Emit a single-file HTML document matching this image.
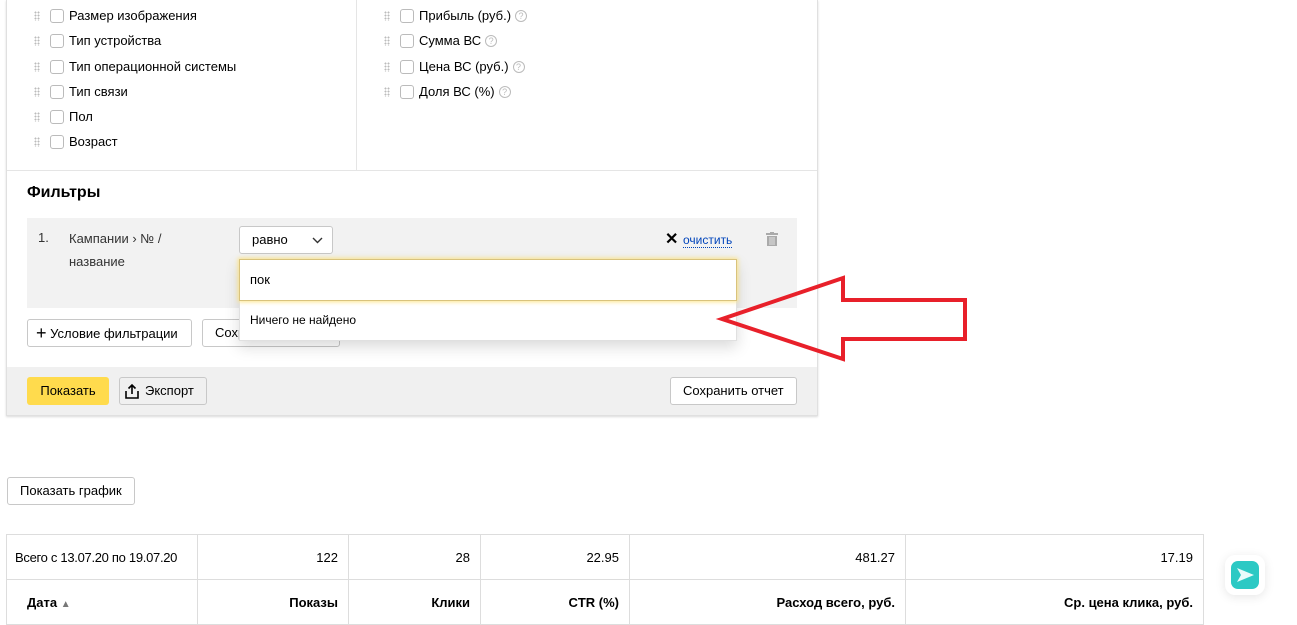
<!DOCTYPE html>
<html><head><meta charset="utf-8"><style>
*{box-sizing:border-box;margin:0;padding:0}
body{width:1297px;height:607px;overflow:hidden;background:#fff;font-family:"Liberation Sans",sans-serif;font-size:13px;color:#000;position:relative;white-space:nowrap}
.a{position:absolute}
.drag{position:absolute;width:6px;height:10px;background-image:radial-gradient(circle,#bbb 0.9px,transparent 1.1px);background-size:3px 3px}
.cb{position:absolute;width:14px;height:14px;border:1px solid #bbb;border-radius:3px;background:#fff}
.q{display:inline-block;width:12px;height:12px;border:1px solid #bbb;border-radius:50%;font-size:9px;color:#bbb;text-align:center;line-height:11px;margin-left:4px;vertical-align:1px}
.btn{position:absolute;border:1px solid #c8c8c8;border-radius:3px;background:#fff;height:28px;line-height:26px;padding:0 12px;font-size:13px;overflow:hidden}
td{border:1px solid #ddd;padding:0 10px;text-align:right;font-size:13px;white-space:nowrap}
</style></head><body>
<div class="a" style="left:6px;top:0;width:812px;height:416px;border:1px solid #e0e0e0;border-top:none;box-shadow:0 1px 2px rgba(0,0,0,.15)"></div>
<div class="a" style="left:356px;top:0;width:1px;height:170px;background:#e5e5e5"></div>
<div class="a" style="left:7px;top:170px;width:810px;height:1px;background:#e5e5e5"></div>

<div class="drag" style="left:34px;top:11px"></div><div class="cb" style="left:50px;top:9px"></div><div class="a" style="left:69px;top:8px">Размер изображения</div>
<div class="drag" style="left:34px;top:36px"></div><div class="cb" style="left:50px;top:34px"></div><div class="a" style="left:69px;top:33px">Тип устройства</div>
<div class="drag" style="left:34px;top:62px"></div><div class="cb" style="left:50px;top:60px"></div><div class="a" style="left:69px;top:59px">Тип операционной системы</div>
<div class="drag" style="left:34px;top:87px"></div><div class="cb" style="left:50px;top:85px"></div><div class="a" style="left:69px;top:84px">Тип связи</div>
<div class="drag" style="left:34px;top:112px"></div><div class="cb" style="left:50px;top:110px"></div><div class="a" style="left:69px;top:109px">Пол</div>
<div class="drag" style="left:34px;top:137px"></div><div class="cb" style="left:50px;top:135px"></div><div class="a" style="left:69px;top:134px">Возраст</div>

<div class="drag" style="left:384px;top:11px"></div><div class="cb" style="left:400px;top:9px"></div><div class="a" style="left:419px;top:8px">Прибыль (руб.)<span class="q">?</span></div>
<div class="drag" style="left:384px;top:36px"></div><div class="cb" style="left:400px;top:34px"></div><div class="a" style="left:419px;top:33px">Сумма ВС<span class="q">?</span></div>
<div class="drag" style="left:384px;top:62px"></div><div class="cb" style="left:400px;top:60px"></div><div class="a" style="left:419px;top:59px">Цена ВС (руб.)<span class="q">?</span></div>
<div class="drag" style="left:384px;top:87px"></div><div class="cb" style="left:400px;top:85px"></div><div class="a" style="left:419px;top:84px">Доля ВС (%)<span class="q">?</span></div>

<div class="a" style="left:27px;top:184px;font-size:16px;font-weight:bold">Фильтры</div>
<div class="a" style="left:27px;top:218px;width:770px;height:90px;background:#f2f2f2"></div>
<div class="a" style="left:38px;top:230px;color:#333">1.</div>
<div class="a" style="left:69px;top:227px;line-height:23px;color:#333">Кампании › № /<br>название</div>
<div class="btn" style="left:239px;top:226px;width:94px;height:28px;padding:0 12px;color:#000">равно<svg class="a" style="left:72px;top:10px" width="11" height="7"><path d="M1 1l4.5 4.5L10 1" stroke="#333" stroke-width="1.4" fill="none"/></svg></div>
<div class="a" style="left:665px;top:229px;font-size:16px;font-weight:bold">✕</div>
<div class="a" style="left:683px;top:234px;font-size:12px;color:#04b;border-bottom:1px dotted #04b;line-height:13px">очистить</div>
<svg class="a" style="left:766px;top:232px" width="12" height="14"><rect x="0" y="1" width="12" height="2" fill="#aaa"/><rect x="4" y="0" width="4" height="2" fill="#aaa"/><rect x="1" y="4" width="10" height="10" fill="#aaa"/><path d="M4 5v8M6 5v8M8 5v8" stroke="#f2f2f2" stroke-width=".8"/></svg>

<div class="btn" style="left:27px;top:319px;width:165px;padding:0 8px"><b style="font-size:18px;font-weight:normal;vertical-align:-1px">+</b> Условие фильтрации</div>
<div class="btn" style="left:202px;top:319px;width:138px">Сохранить фильтр</div>

<div class="a" style="left:239px;top:259px;width:498px;height:82px;background:#fff;box-shadow:0 6px 14px rgba(0,0,0,.15);border:1px solid #e0e0e0"></div>
<div class="a" style="left:239px;top:259px;width:498px;height:42px;border:1px solid #d9c37c;box-shadow:0 0 4px 1px #fde58a;background:#fff;padding:0 10px;line-height:40px">пок</div>
<div class="a" style="left:250px;top:313px;font-size:12px">Ничего не найдено</div>

<div class="a" style="left:7px;top:367px;width:810px;height:48px;background:#f0f0f0"></div>
<div class="a" style="left:27px;top:377px;width:82px;height:28px;background:#ffdb4d;border-radius:3px;line-height:28px;text-align:center">Показать</div>
<div class="btn" style="left:119px;top:377px;width:88px;background:#f0f0f0;padding:0 0 0 25px"><svg class="a" style="left:5px;top:5px" width="14" height="16"><path d="M7 11V2M3.5 5.5L7 2l3.5 3.5M1 8v7h12V8" stroke="#000" stroke-width="1.6" fill="none"/></svg>Экспорт</div>
<div class="btn" style="left:670px;top:377px;width:127px">Сохранить отчет</div>

<svg class="a" style="left:0;top:0" width="1297" height="607"><polygon points="722,319 843,278 843,300 965,300 965,339 843,339 843,359" fill="none" stroke="#e8202a" stroke-width="4" stroke-linejoin="miter"/></svg>

<div class="btn" style="left:7px;top:477px;width:128px;line-height:25px">Показать график</div>

<table class="a" style="left:6px;top:534px;width:1198px;border-collapse:collapse;table-layout:fixed">
<colgroup><col style="width:191px"><col style="width:151px"><col style="width:132px"><col style="width:149px"><col style="width:276px"><col></colgroup>
<tr style="height:45px"><td style="text-align:left;letter-spacing:-0.3px;padding:0 8px">Всего с 13.07.20 по 19.07.20</td><td>122</td><td>28</td><td>22.95</td><td>481.27</td><td>17.19</td></tr>
<tr style="height:45px"><td style="text-align:left;padding-left:20px;font-weight:bold">Дата <span style="color:#777;font-size:10px">▲</span></td><td style="font-weight:bold">Показы</td><td style="font-weight:bold">Клики</td><td style="font-weight:bold">CTR (%)</td><td style="font-weight:bold">Расход всего, руб.</td><td style="font-weight:bold">Ср. цена клика, руб.</td></tr>
</table>

<div class="a" style="left:1225px;top:555px;width:40px;height:40px;background:#fff;border-radius:10px;box-shadow:0 2px 10px rgba(0,0,0,.1)"></div>
<svg class="a" style="left:1231px;top:561px" width="28" height="28"><rect width="28" height="28" rx="7" fill="#2cc9c4"/><path d="M6 7l17 7-17 7 4-7z" fill="#e8fbfa"/></svg>
</body></html>
